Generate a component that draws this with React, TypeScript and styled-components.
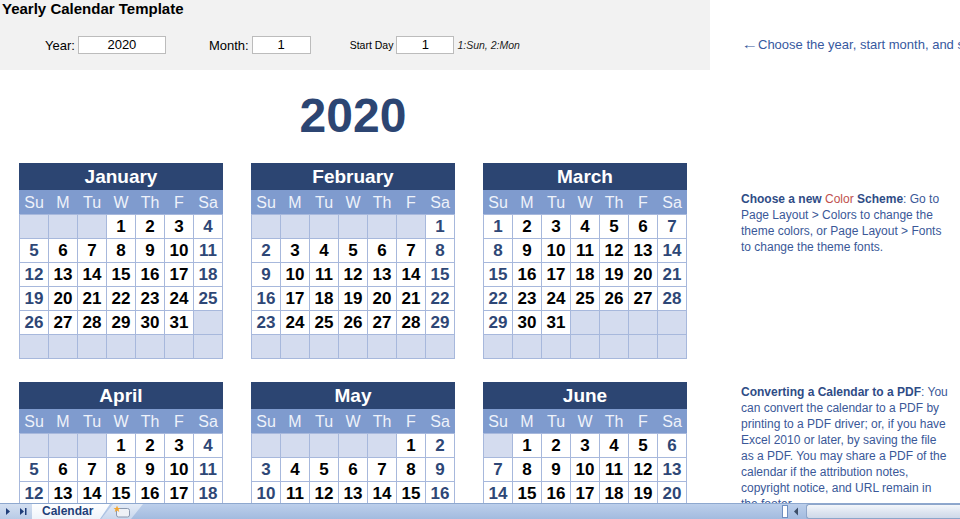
import styled, { createGlobalStyle } from "styled-components";

const YEAR = 2020;
const START_MONTH = 1;
const START_DAY = 1;

const MONTH_NAMES = [
  "January",
  "February",
  "March",
  "April",
  "May",
  "June",
  "July",
  "August",
  "September",
  "October",
  "November",
  "December",
];

const DAY_NAMES = ["Su", "M", "Tu", "W", "Th", "F", "Sa"];

const Navy = "#2c4572";
const NoteBlue = "#3a5898";

const GlobalStyle = createGlobalStyle`
  html, body {
    margin: 0;
    height: 100%;
    overflow: hidden;
    background: #fff;
    font-family: "Liberation Sans", Arial, sans-serif;
  }
`;

function buildMonth(year: number, month: number): (number | null)[] {
  const first = new Date(year, month, 1).getDay();
  const offset = (first - (START_DAY - 1) + 7) % 7;
  const days = new Date(year, month + 1, 0).getDate();
  const cells: (number | null)[] = [];
  for (let i = 0; i < 42; i++) {
    const d = i - offset + 1;
    cells.push(d >= 1 && d <= days ? d : null);
  }
  return cells;
}

function App(): JSX.Element {
  const months = Array.from({ length: 12 }, (_, i) => {
    const m = (START_MONTH - 1 + i) % 12;
    const y = YEAR + Math.floor((START_MONTH - 1 + i) / 12);
    return { name: MONTH_NAMES[m], cells: buildMonth(y, m) };
  });

  return (
    <Window>
      <GlobalStyle />
      <Sheet>
        <Main>
          <TopPanel>
            <SheetTitle>Yearly Calendar Template</SheetTitle>
            <Controls>
              <Field $space={0}>
                <FieldLabel>Year:</FieldLabel>
                <ValueBox $w={88}>{YEAR}</ValueBox>
              </Field>
              <Field $space={43}>
                <FieldLabel>Month:</FieldLabel>
                <ValueBox $w={59}>{START_MONTH}</ValueBox>
              </Field>
              <Field $space={39}>
                <FieldLabel $small>Start Day</FieldLabel>
                <ValueBox $w={58}>{START_DAY}</ValueBox>
              </Field>
              <Hint>1:Sun, 2:Mon</Hint>
            </Controls>
          </TopPanel>

          <MonthsArea>
            <YearTitle>{YEAR}</YearTitle>
            <MonthGrid>
              {months.map((month) => (
                <MonthCard key={month.name}>
                  <MonthName>{month.name}</MonthName>
                  <WeekRow>
                    {DAY_NAMES.map((d) => (
                      <DayName key={d}>{d}</DayName>
                    ))}
                  </WeekRow>
                  <DateGrid>
                    {month.cells.map((day, i) => (
                      <DateCell
                        key={i}
                        $empty={day === null}
                        $weekend={i % 7 === 0 || i % 7 === 6}
                      >
                        {day}
                      </DateCell>
                    ))}
                  </DateGrid>
                </MonthCard>
              ))}
            </MonthGrid>
          </MonthsArea>
        </Main>

        <Side>
          <SideHint>
            <Arrow>←</Arrow>Choose the year, start month, and start day.
          </SideHint>
          <Note $top={138}>
            <b>Choose a new</b> <Accent>Color</Accent> <b>Scheme</b>: Go to
            Page Layout &gt; Colors to change the theme colors, or Page Layout
            &gt; Fonts to change the theme fonts.
          </Note>
          <Note $top={129}>
            <b>Converting a Calendar to a PDF</b>: You can convert the calendar
            to a PDF by printing to a PDF driver; or, if you have Excel 2010 or
            later, by saving the file as a PDF. You may share a PDF of the
            calendar if the attribution notes, copyright notice, and URL remain
            in the footer.
          </Note>
        </Side>
      </Sheet>

      <TabBar>
        <NavButtons>
          <svg width="32" height="15" viewBox="0 0 32 15">
            <path d="M6 4 L10 7.5 L6 11 Z" fill="#1f3d78" />
            <path d="M20 4 L24 7.5 L20 11 Z" fill="#1f3d78" />
            <rect x="25" y="4" width="1.5" height="7" fill="#1f3d78" />
          </svg>
        </NavButtons>
        <SheetTab>Calendar</SheetTab>
        <NewTab>
          <svg width="18" height="13" viewBox="0 0 18 13">
            <rect
              x="3.5"
              y="3.5"
              width="13"
              height="8.5"
              rx="2"
              fill="#eef1f6"
              stroke="#8b99b0"
            />
            <path
              d="M4 0.5 L5 3 L7.5 3 L5.5 4.6 L6.3 7 L4 5.6 L1.7 7 L2.5 4.6 L0.5 3 L3 3 Z"
              fill="#f2a530"
            />
          </svg>
        </NewTab>
        <Spacer />
        <Splitter />
        <ScrollArrow>
          <svg width="18" height="15" viewBox="0 0 18 15">
            <path d="M10 3.5 L6 7.5 L10 11.5 Z" fill="#3d4e68" />
          </svg>
        </ScrollArrow>
        <ScrollTrack />
      </TabBar>
    </Window>
  );
}

export default App;

const Window = styled.div`
  display: flex;
  flex-direction: column;
  height: 100vh;
`;

const Sheet = styled.div`
  flex: 1;
  min-height: 0;
  overflow: hidden;
  display: grid;
  grid-template-columns: 710px 1fr;
  align-items: start;
`;

const Main = styled.div`
  display: flex;
  flex-direction: column;
`;

const TopPanel = styled.div`
  height: 70px;
  background: #f2f2f2;
`;

const SheetTitle = styled.h1`
  margin: 0;
  padding-left: 2px;
  font-size: 15px;
  line-height: 18px;
  font-weight: bold;
  color: #000;
`;

const Controls = styled.div`
  display: flex;
  align-items: center;
  height: 18px;
  margin-top: 18px;
  padding-left: 45px;
`;

const Field = styled.div<{ $space: number }>`
  display: flex;
  align-items: center;
  gap: 3px;
  margin-left: ${(p) => p.$space}px;
`;

const FieldLabel = styled.span<{ $small?: boolean }>`
  font-size: ${(p) => (p.$small ? "10.5px" : "13px")};
  color: #000;
`;

const ValueBox = styled.div<{ $w: number }>`
  box-sizing: border-box;
  width: ${(p) => p.$w}px;
  height: 18px;
  border: 1px solid #bcbcbc;
  background: #fff;
  font-size: 13px;
  line-height: 16px;
  text-align: center;
  color: #000;
`;

const Hint = styled.span`
  margin-left: 3px;
  font-size: 10.5px;
  font-style: italic;
  color: #222;
`;

const MonthsArea = styled.div`
  width: 668px;
  padding-left: 19px;
`;

const YearTitle = styled.div`
  margin: 22px 0 23px;
  text-align: center;
  font-size: 48px;
  line-height: 48px;
  font-weight: bold;
  color: ${Navy};
`;

const MonthGrid = styled.div`
  display: grid;
  grid-template-columns: repeat(3, 204px);
  column-gap: 28px;
  row-gap: 23px;
`;

const MonthCard = styled.div`
  display: flex;
  flex-direction: column;
`;

const MonthName = styled.div`
  height: 27px;
  line-height: 28px;
  background: ${Navy};
  color: #fff;
  font-size: 19px;
  font-weight: bold;
  text-align: center;
`;

const WeekRow = styled.div`
  box-sizing: border-box;
  display: grid;
  grid-template-columns: repeat(7, 28px);
  column-gap: 1px;
  padding: 2px 1px 0;
  height: 24px;
  background: #7f9bce;
`;

const DayName = styled.span`
  font-size: 16px;
  line-height: 22px;
  text-align: center;
  color: #eef2fa;
`;

const DateGrid = styled.div`
  display: grid;
  grid-template-columns: repeat(7, 28px);
  grid-auto-rows: 23px;
  gap: 1px;
  padding: 1px;
  background: #a7b8dc;
`;

const DateCell = styled.div<{ $empty: boolean; $weekend: boolean }>`
  background: ${(p) => (p.$empty ? "#d4dcef" : "#fff")};
  color: ${(p) => (p.$weekend ? "#2e4776" : "#000")};
  font-size: 17px;
  font-weight: bold;
  line-height: 23px;
  text-align: center;
`;

const Side = styled.div`
  padding: 37px 0 0 31px;
  color: ${NoteBlue};
  overflow: hidden;
`;

const SideHint = styled.div`
  font-size: 13px;
  line-height: 16px;
  white-space: nowrap;
  color: #3759a0;
`;

const Arrow = styled.span`
  display: inline-block;
  width: 17px;
  transform: scaleX(1.3);
  transform-origin: left center;
`;

const Note = styled.p<{ $top: number }>`
  width: 210px;
  margin: ${(p) => p.$top}px 0 0;
  font-size: 12px;
  line-height: 16px;

  b {
    color: #2f4c86;
  }
`;

const Accent = styled.span`
  color: #c0504d;
`;

const TabBar = styled.div`
  box-sizing: border-box;
  display: flex;
  align-items: stretch;
  height: 16px;
  border-top: 1px solid #8ea8cf;
  background: linear-gradient(#bccfeb, #a3bbdf);
`;

const NavButtons = styled.div`
  width: 32px;
  background: linear-gradient(#d3dff1, #b9cbe6);
  display: flex;
  align-items: center;
`;

const SheetTab = styled.div`
  width: 78px;
  padding-left: 10px;
  box-sizing: border-box;
  background: linear-gradient(#ffffff, #eef3fa);
  clip-path: polygon(0 0, 100% 0, calc(100% - 10px) 100%, 0 100%);
  color: #1f3f79;
  font-size: 12px;
  font-weight: bold;
  line-height: 15px;
`;

const NewTab = styled.div`
  width: 42px;
  margin-left: -9px;
  display: flex;
  align-items: center;
  justify-content: center;
  background: linear-gradient(#e3ebf7, #c9d7ed);
  clip-path: polygon(12px 0, 100% 0, calc(100% - 12px) 100%, 0 100%);
`;

const Spacer = styled.div`
  flex: 1;
`;

const Splitter = styled.div`
  width: 6px;
  margin: 1px 0;
  box-sizing: border-box;
  border: 1px solid #6f8fc1;
  background: linear-gradient(90deg, #fff 40%, #7f8fa8 40%, #7f8fa8 60%, #fff 60%);
`;

const ScrollArrow = styled.div`
  width: 18px;
  display: flex;
  align-items: center;
`;

const ScrollTrack = styled.div`
  width: 154px;
  box-sizing: border-box;
  border: 1px solid #8da5c9;
  border-right: none;
  border-radius: 3px 0 0 3px;
  background: linear-gradient(#f3f6fb, #dbe3ef 60%, #cfd9e9);
`;
